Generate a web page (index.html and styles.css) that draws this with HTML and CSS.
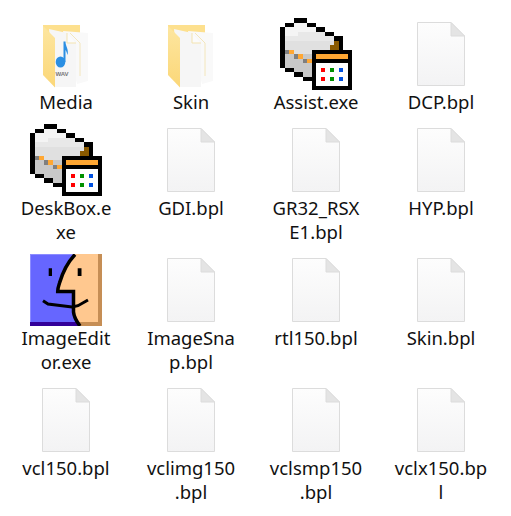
FILE: index.html
```html
<!DOCTYPE html>
<html lang="en">
<head>
    <meta charset="UTF-8">
    <meta name="viewport" content="width=device-width, initial-scale=1.0">
    <title>Folder</title>
    <link rel="stylesheet" href="styles.css">
</head>
<body>
    <svg class="defs" aria-hidden="true">
        <linearGradient id="paper" x1="0" y1="0" x2="0" y2="1">
            <stop offset="0" stop-color="#fdfdfd"/>
            <stop offset="1" stop-color="#f3f3f4"/>
        </linearGradient>
        <linearGradient id="flap" x1="0" y1="0" x2="0" y2="1">
            <stop offset="0" stop-color="#fde6a0"/>
            <stop offset="1" stop-color="#fbd778"/>
        </linearGradient>

        <symbol id="file" viewBox="0 0 72 72">
            <path d="M12.5 4.5H46L59.5 18V67.5H12.5Z" fill="url(#paper)" stroke="#dcdcdc"/>
            <path d="M46 4.5V18H59.5Z" fill="#e4e4e4" stroke="#dcdcdc"/>
        </symbol>

        <symbol id="folder" viewBox="0 0 72 72">
            <path d="M13 7H50V17H13Z" fill="#fde08e"/>
            <path d="M33 13L58 15V63L47 66Z" fill="#f9f9f9"/>
            <path d="M40 15L50 25V58" fill="none" stroke="#f3e6bc"/>
            <path d="M19 11L37 15L46 24V69H25Z" fill="#f6f6f6"/>
            <path d="M37 15V25H46" fill="#fbfbfb" stroke="#f3e3b0"/>
            <path d="M13 8L25 20V69.500L13 57Z" fill="url(#flap)"/>
        </symbol>

        <symbol id="box" viewBox="0 0 16 16" shape-rendering="crispEdges">
            <g fill="none" stroke-width="1">
                <path stroke="#f4f4f4" d="M3 1.500h3M1 2.500h7M1 3.500h3"/>
                <path stroke="#e8e8e8" d="M4 3.500h6M1 4.500h11"/>
                <path stroke="#e0e0e0" d="M1 5.500h12M1 6.500h10M3 7.500h4"/>
                <path stroke="#c8c8c8" d="M1 8.500h2M5 8.500h2M1 9.500h4M1 10.500h6M3 11.500h4M5 12.500h2"/>
                <path stroke="#7f7f7f" d="M1 7.500h1M3 8.500h1M5 9.500h1"/>
                <path stroke="#ffa733" d="M2 7.500h1M4 8.500h1M6 9.500h1M8 8.500h7"/>
                <path stroke="#8a5a00" d="M12 5.500h1M11 6.500h2"/>
                <path stroke="#000" d="M3 .500h3M1 1.500h2M6 1.500h2M0 2.500h1M8 2.500h2M0 3.500h1M10 3.500h2M0 4.500h1M12 4.500h2M0 5.500h1M13 5.500h1M0 6.500h1M13 6.500h1M0 7.500h1M7 7.500h9M0 8.500h1M7 8.500h1M15 8.500h1M0 9.500h1M7 9.500h9M0 10.500h1M7 10.500h1M15 10.500h1M1 11.500h2M7 11.500h1M15 11.500h1M3 12.500h2M7 12.500h1M15 12.500h1M5 13.500h3M15 13.500h1M7 14.500h1M15 14.500h1M7 15.500h9"/>
                <path fill="#fff" stroke="none" d="M8 10H15V15H8Z"/>
                <path fill="#f00" stroke="none" d="M9 11H10.100V12.100H9ZM9 13H10.100V14.100H9Z"/>
                <path fill="#009000" stroke="none" d="M11 11H12.100V12.100H11ZM11 13H12.100V14.100H11Z"/>
                <path fill="#0050e0" stroke="none" d="M13 11H14.100V12.100H13ZM13 13H14.100V14.100H13Z"/>
            </g>
        </symbol>

        <symbol id="face" viewBox="0 0 72 72">
            <path d="M0 0H52V72H0Z" fill="#6666ff"/>
            <path d="M0 .500H44M.500 0V68" fill="none" stroke="#8c8cff"/>
            <path d="M0 68H52V72H0Z" fill="#330099"/>
            <path d="M44.300 0H72V72H50L47 66L43.500 58V37.500H27.700L29.300 29.300L36 12.700Z" fill="#ffc88f"/>
            <path d="M68 0H72V72H50L47.500 68H68Z" fill="#c68e55"/>
            <path d="M45 .500C38 8 33 17 29.500 29C28.500 32 27.700 35 27.700 37.500H43.500V58C44 63 47 68 50 72" fill="none" stroke="#000" stroke-width="3.500"/>
            <path d="M13 46.700L18 50L42 53L48 51.700L58 46" fill="none" stroke="#000" stroke-width="3"/>
            <path d="M18.700 14.300H22V22H18.700ZM47.700 14.300H51.500V22H47.700Z" fill="#000"/>
        </symbol>
    </svg>

    <div class="grid">
        <div class="item">
            <svg class="icon" viewBox="0 0 72 72">
                <use href="#folder"/>
                <ellipse cx="30.500" cy="44" rx="4.800" ry="5.500" fill="#2b8fe3"/>
                <path d="M33.500 44V23.500H35.500C35.500 29 39 31 37.500 37C36.500 33 35.500 32 35.500 32V44Z" fill="#2b8fe3"/>
                <text class="wav" x="32" y="57.500" text-anchor="middle">WAV</text>
            </svg>
            <div class="name">Media</div>
        </div>
        <div class="item"><svg class="icon"><use href="#folder"/></svg><div class="name">Skin</div></div>
        <div class="item"><svg class="icon"><use href="#box"/></svg><div class="name">Assist.exe</div></div>
        <div class="item"><svg class="icon"><use href="#file"/></svg><div class="name">DCP.bpl</div></div>

        <div class="item"><svg class="icon"><use href="#box"/></svg><div class="name">DeskBox.e<br>xe</div></div>
        <div class="item"><svg class="icon"><use href="#file"/></svg><div class="name">GDI.bpl</div></div>
        <div class="item"><svg class="icon"><use href="#file"/></svg><div class="name">GR32_RSX<br>E1.bpl</div></div>
        <div class="item"><svg class="icon"><use href="#file"/></svg><div class="name">HYP.bpl</div></div>

        <div class="item"><svg class="icon"><use href="#face"/></svg><div class="name">ImageEdit<br>or.exe</div></div>
        <div class="item"><svg class="icon"><use href="#file"/></svg><div class="name">ImageSna<br>p.bpl</div></div>
        <div class="item"><svg class="icon"><use href="#file"/></svg><div class="name">rtl150.bpl</div></div>
        <div class="item"><svg class="icon"><use href="#file"/></svg><div class="name">Skin.bpl</div></div>

        <div class="item"><svg class="icon"><use href="#file"/></svg><div class="name">vcl150.bpl</div></div>
        <div class="item"><svg class="icon"><use href="#file"/></svg><div class="name">vclimg150<br>.bpl</div></div>
        <div class="item"><svg class="icon"><use href="#file"/></svg><div class="name">vclsmp150<br>.bpl</div></div>
        <div class="item"><svg class="icon"><use href="#file"/></svg><div class="name">vclx150.bp<br>l</div></div>
    </div>
</body>
</html>
```

FILE: styles.css
```css
body{
    margin: 0;
    background-color: #fff;
    font-family: "Noto Sans", sans-serif;
    color: #111;
}
.defs{
    display: block;
    width: 0;
    height: 0;
}
.grid{
    display: grid;
    grid-template-columns: repeat(4, 125px);
    row-gap: 10px;
    padding: 18px 0 0 3.5px;
}
.item{
    display: flex;
    flex-direction: column;
    align-items: center;
}
.icon{
    display: block;
    width: 72px;
    height: 72px;
}
.name{
    font-size: 18.5px;
    line-height: 24px;
    text-align: center;
    white-space: nowrap;
}
.wav{
    font-family: "Liberation Sans", sans-serif;
    font-size: 6px;
    font-weight: bold;
    fill: #777;
}
```
